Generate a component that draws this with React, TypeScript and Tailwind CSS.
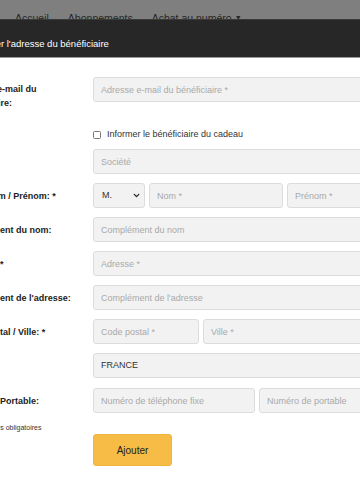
import { ChevronDown } from "lucide-react";

const inputCls =
  "block h-[25px] rounded-[3px] border border-[#dcdcdc] bg-[#f2f2f2] px-[7px] text-[9px] text-[#333] placeholder:text-[#a9a9a9] outline-none";

function Row({ label, children, className = "", top = false }: { label?: React.ReactNode; children: React.ReactNode; className?: string; top?: boolean }) {
  return (
    <div className={`grid grid-cols-[134px_328px] ${top ? "items-start" : "items-center"} ${className}`}>
      <div className="text-[9px] font-bold leading-[14px] text-[#222]">{label}</div>
      <div className="flex">{children}</div>
    </div>
  );
}

export default function App() {
  return (
    <div className="relative h-[480px] w-[360px] overflow-hidden bg-[#7f7f7f]" style={{ fontFamily: '"Liberation Sans", Arial, sans-serif' }}>
      <nav className="flex gap-[19px] pl-[15px] pt-[12px] text-[10.5px] leading-[12px] text-[#262626]">
        <span>Accueil</span>
        <span>Abonnements</span>
        <span className="flex items-center gap-[3px]">
          Achat au numéro <span className="text-[7px]">▼</span>
        </span>
      </nav>

      <div className="absolute left-[-56px] top-[19px] w-[500px] bg-white">
        <div className="h-[39px] border-t border-[#3a3a3a] border-b border-b-[#9a9a9a] bg-[#272727] pl-[30px] pt-[18px] text-[9.5px] leading-[12px] text-white">
          Ajouter l'adresse du bénéficiaire
        </div>

        <div className="pl-[15px] pt-[19px] pb-[40px]">
          <Row top label={<div className="pt-[5px]">Adresse e-mail du<br />bénéficiaire:</div>}>
            <input className={`${inputCls} w-full`} placeholder="Adresse e-mail du bénéficiaire *" />
          </Row>

          <Row className="mt-[16px]">
            <label className="flex h-[18px] items-center gap-[6px] text-[9px] text-[#333]">
              <span className="h-[8px] w-[8px] rounded-[1.5px] border border-[#777] bg-white" />
              Informer le bénéficiaire du cadeau
            </label>
          </Row>

          <Row className="mt-[5px]">
            <input className={`${inputCls} w-full`} placeholder="Société" />
          </Row>

          <Row className="mt-[9px]" label="Titre / Nom / Prénom: *">
            <div className="flex gap-[4px]">
              <div className={`${inputCls} flex w-[52px] shrink-0 items-center justify-between !pr-[3px]`}>
                <span className="pl-[1px]">M.</span>
                <ChevronDown size={9} strokeWidth={3.5} className="text-[#222]" />
              </div>
              <input className={`${inputCls} w-[134px]`} placeholder="Nom *" />
              <input className={`${inputCls} w-[134px]`} placeholder="Prénom *" />
            </div>
          </Row>

          <Row className="mt-[9px]" label="Complément du nom:">
            <input className={`${inputCls} w-full`} placeholder="Complément du nom" />
          </Row>

          <Row className="mt-[9px]" label="Adresse: *">
            <input className={`${inputCls} w-full`} placeholder="Adresse *" />
          </Row>

          <Row className="mt-[9px]" label="Complément de l'adresse:">
            <input className={`${inputCls} w-full`} placeholder="Complément de l'adresse" />
          </Row>

          <Row className="mt-[9px]" label="Code postal / Ville: *">
            <div className="flex w-full gap-[4px]">
              <input className={`${inputCls} w-[106px]`} placeholder="Code postal *" />
              <input className={`${inputCls} min-w-0 flex-1`} placeholder="Ville *" />
            </div>
          </Row>

          <Row className="mt-[9px]">
            <div className={`${inputCls} flex w-full items-center`}>FRANCE</div>
          </Row>

          <Row className="mt-[10px]" label="Tél. fixe / Portable:">
            <div className="flex w-full gap-[4px]">
              <input className={`${inputCls} w-[162px]`} placeholder="Numéro de téléphone fixe" />
              <input className={`${inputCls} min-w-0 flex-1`} placeholder="Numéro de portable" />
            </div>
          </Row>

          <div className="mt-[9px] h-[12px] pl-[14px] text-[7px] leading-[12px] text-[#333]">* Champs obligatoires</div>

          <Row>
            <button className="h-[32px] w-[79px] rounded-[3px] border border-[#efb53c] bg-[#f6bc45] text-[10px] text-[#222]">
              Ajouter
            </button>
          </Row>
        </div>
      </div>
    </div>
  );
}
